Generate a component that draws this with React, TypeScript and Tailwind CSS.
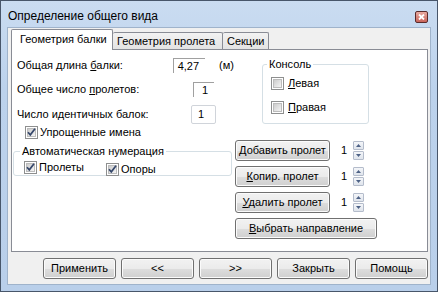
import { useId, type ReactNode } from "react";

function CheckBox({ checked = false }: { checked?: boolean }) {
  const id = useId();
  return (
    <svg width="13" height="13" viewBox="0 0 13 13" className="shrink-0">
      <defs>
        <linearGradient id={id} x1="0" y1="0" x2="1" y2="1">
          <stop offset="0" stopColor="#c9c9c9" />
          <stop offset="1" stopColor="#f7f7f7" />
        </linearGradient>
      </defs>
      <rect x="0.5" y="0.5" width="12" height="12" fill="#fff" stroke="#8e8f8f" />
      <rect x="2.5" y="2.5" width="8" height="8" fill={`url(#${id})`} stroke="#bcbcbc" />
      {checked && (
        <path d="M3 6.2 L5.3 8.8 L10 2.8" fill="none" stroke="#34466a" strokeWidth="1.7" />
      )}
    </svg>
  );
}

function Btn({ children, className = "" }: { children: ReactNode; className?: string }) {
  return (
    <div
      className={`flex items-center justify-center rounded-[3px] border border-[#707070] bg-[linear-gradient(#f2f2f2_0%,#ebebeb_50%,#dddddd_51%,#cfcfcf_100%)] shadow-[inset_0_0_0_1px_#fbfbfb] ${className}`}
    >
      {children}
    </div>
  );
}

function Spin() {
  return (
    <div className="ml-[5px] flex h-[19px] w-[29px] items-center bg-white">
      <span className="ml-[6px] flex-1">1</span>
      <div className="mr-[0px] flex h-[19px] w-[11px] flex-col gap-[1px]">
        <div className="flex flex-1 items-center justify-center rounded-[1px] border border-[#b4bccb] bg-[linear-gradient(#f4f6f9,#dfe4ec)]">
          <svg width="5" height="3" viewBox="0 0 5 3">
            <path d="M0 3 L2.5 0 L5 3 Z" fill="#4d6185" />
          </svg>
        </div>
        <div className="flex flex-1 items-center justify-center rounded-[1px] border border-[#b4bccb] bg-[linear-gradient(#f4f6f9,#dfe4ec)]">
          <svg width="5" height="3" viewBox="0 0 5 3">
            <path d="M0 0 L2.5 3 L5 0 Z" fill="#4d6185" />
          </svg>
        </div>
      </div>
    </div>
  );
}

export default function App() {
  return (
    <div className="flex h-[292px] w-[438px] flex-col border border-[#48566a] bg-[linear-gradient(#cadcf1,#bcd2ec_30%,#b9cfea)] font-['Liberation_Sans',sans-serif] text-[11px] leading-[13px] text-black">
      {/* заголовок */}
      <div className="flex h-[26px] items-center pl-[7px] pr-[9px] pt-[5px]">
        <span className="flex-1 text-[12px]">Определение общего вида</span>
        <div className="flex h-[12px] w-[13px] items-center justify-center rounded-[2px] border border-[#5a2b2b] bg-[linear-gradient(#e9aaa0,#c9645a)]">
          <svg width="7" height="6" viewBox="0 0 7 6">
            <path d="M1 0.5 L6 5.5 M6 0.5 L1 5.5" stroke="#fff" strokeWidth="1.8" />
          </svg>
        </div>
      </div>

      {/* клиентская область */}
      <div className="mx-[6px] mb-[6px] flex flex-1 flex-col border border-[#9fb3cb] bg-[#f0f0f0]">
        {/* вкладки */}
        <div className="relative z-10 -mb-[1px] flex items-end pl-[3px] pt-[1px]">
          <div className="h-[21px] w-[102px] rounded-t-[2px] border-x border-t border-[#898c95] bg-white pl-[8px] pt-[3px]">
            Геометрия балки
          </div>
          <div className="mb-[1px] h-[17px] w-[110px] rounded-t-[2px] border-r border-t border-[#898c95] bg-[linear-gradient(#f2f2f2,#e3e3e3)] pl-[4px] pt-[2px]">
            Геометрия пролета
          </div>
          <div className="mb-[1px] h-[17px] w-[46px] rounded-t-[2px] border-r border-t border-[#898c95] bg-[linear-gradient(#f2f2f2,#e3e3e3)] pl-[4px] pt-[2px]">
            Секции
          </div>
        </div>

        {/* панель */}
        <div className="ml-[3px] mr-[2px] flex h-[203px] border border-[#898c95] bg-white">
          {/* левая колонка */}
          <div className="flex w-[222px] flex-col pt-[8px]">
            <div className="flex h-[15px] items-center">
              <span className="w-[169px] pl-[5px]">
                Общая длина <u>б</u>алки:
              </span>
              <div className="flex h-[15px] w-[33px] items-center justify-end border-l border-t border-[#a0a0a0] bg-white pr-[6px]">
                4,27
              </div>
              <span className="ml-[14px] whitespace-nowrap">(м)</span>
            </div>
            <div className="mt-[9px] flex h-[15px] items-center">
              <span className="w-[181px] pl-[5px]">
                Общее число <u>п</u>ролетов:
              </span>
              <div className="flex h-[15px] w-[21px] items-center justify-end border-l border-t border-[#a0a0a0] bg-white pr-[6px]">
                1
              </div>
            </div>
            <div className="mt-[8px] flex h-[19px] items-center">
              <span className="w-[179px] pl-[5px]">Число идентичных балок:</span>
              <div className="flex h-[19px] w-[25px] items-center rounded-[2px] border border-[#d0d4da] bg-white pl-[6px]">
                1
              </div>
            </div>
            <div className="mt-[2px] flex items-center gap-[2px] pl-[13px]">
              <CheckBox checked />
              <span>Упрощенные имена</span>
            </div>
            <fieldset className="ml-[1px] mt-[6px] h-[31px] w-[219px] rounded-[3px] border border-[#d5dfe5]">
              <legend className="ml-[6px] px-[2px]">Автоматическая нумерация</legend>
              <div className="mt-[3px] flex items-start pl-[10px]">
                <div className="flex w-[82px] items-center gap-[2px]">
                  <CheckBox checked />
                  <span>Пролеты</span>
                </div>
                <div className="mt-[2px] flex items-center gap-[2px]">
                  <CheckBox checked />
                  <span>Опоры</span>
                </div>
              </div>
            </fieldset>
          </div>

          {/* правая колонка */}
          <div className="flex flex-1 flex-col">
            <fieldset className="ml-[28px] mt-[8px] h-[66px] w-[107px] rounded-[3px] border border-[#d5dfe5]">
              <legend className="ml-[4px] px-[2px]">Консоль</legend>
              <div className="mt-[6px] flex items-center gap-[4px] pl-[8px]">
                <CheckBox />
                <span>
                  <u>Л</u>евая
                </span>
              </div>
              <div className="mt-[11px] flex items-center gap-[4px] pl-[8px]">
                <CheckBox />
                <span>
                  <u>П</u>равая
                </span>
              </div>
            </fieldset>

            <div className="ml-[1px] mt-[16px] flex flex-col gap-[5px]">
              <div className="flex items-center">
                <Btn className="h-[21px] w-[95px]">
                  <span>
                    <u>Д</u>обавить пролет
                  </span>
                </Btn>
                <Spin />
              </div>
              <div className="flex items-center">
                <Btn className="h-[21px] w-[95px]">
                  <span>
                    <u>К</u>опир. пролет
                  </span>
                </Btn>
                <Spin />
              </div>
              <div className="flex items-center">
                <Btn className="h-[21px] w-[95px]">
                  <span>
                    <u>У</u>далить пролет
                  </span>
                </Btn>
                <Spin />
              </div>
              <Btn className="h-[21px] w-[142px]">
                <span>
                  <u>В</u>ыбрать направление
                </span>
              </Btn>
            </div>
          </div>
        </div>

        {/* нижние кнопки */}
        <div className="mt-[6px] flex justify-end gap-[5px] pr-[2px]">
          <Btn className="h-[21px] w-[73px]">Применить</Btn>
          <Btn className="h-[21px] w-[73px]">&lt;&lt;</Btn>
          <Btn className="h-[21px] w-[73px]">&gt;&gt;</Btn>
          <Btn className="h-[21px] w-[73px]">Закрыть</Btn>
          <Btn className="h-[21px] w-[73px]">Помощь</Btn>
        </div>
      </div>
    </div>
  );
}
